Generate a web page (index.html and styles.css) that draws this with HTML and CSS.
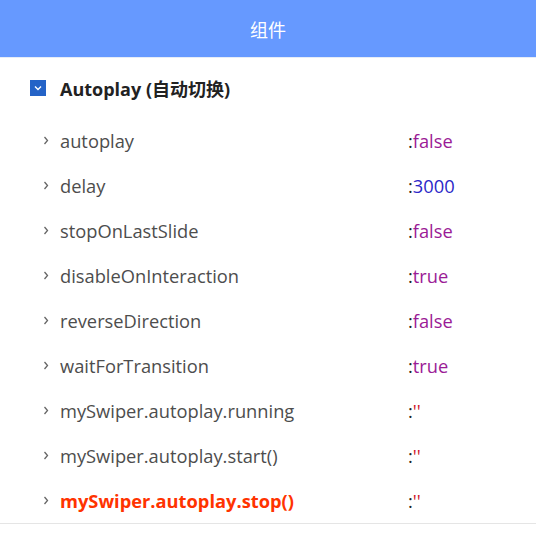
FILE: index.html
```html
<!DOCTYPE html>
<html lang="zh">
<head>
<meta charset="utf-8">
<link rel="stylesheet" href="styles.css">
</head>
<body>
<header class="nav">组件</header>
<section class="group">
  <div class="group-head">
    <span class="check"><svg width="16" height="16" viewBox="0 0 16 16"><rect width="16" height="16" fill="#2463c7"/><path d="M5 6.5 L8 9.5 L11 6.5" fill="none" stroke="#fff" stroke-width="1.4"/></svg></span>
    <span class="group-title">Autoplay (自动切换)</span>
  </div>
  <ul class="rows">
    <li class="row"><span class="arrow"><svg width="6" height="9" viewBox="0 0 6 9"><path d="M1.5 1 L4.5 4.5 L1.5 8" fill="none" stroke="#666" stroke-width="1.3"/></svg></span><span class="key">autoplay</span><span class="val">:<span class="bool">false</span></span></li>
    <li class="row"><span class="arrow"><svg width="6" height="9" viewBox="0 0 6 9"><path d="M1.5 1 L4.5 4.5 L1.5 8" fill="none" stroke="#666" stroke-width="1.3"/></svg></span><span class="key">delay</span><span class="val">:<span class="num">3000</span></span></li>
    <li class="row"><span class="arrow"><svg width="6" height="9" viewBox="0 0 6 9"><path d="M1.5 1 L4.5 4.5 L1.5 8" fill="none" stroke="#666" stroke-width="1.3"/></svg></span><span class="key">stopOnLastSlide</span><span class="val">:<span class="bool">false</span></span></li>
    <li class="row"><span class="arrow"><svg width="6" height="9" viewBox="0 0 6 9"><path d="M1.5 1 L4.5 4.5 L1.5 8" fill="none" stroke="#666" stroke-width="1.3"/></svg></span><span class="key">disableOnInteraction</span><span class="val">:<span class="bool">true</span></span></li>
    <li class="row"><span class="arrow"><svg width="6" height="9" viewBox="0 0 6 9"><path d="M1.5 1 L4.5 4.5 L1.5 8" fill="none" stroke="#666" stroke-width="1.3"/></svg></span><span class="key">reverseDirection</span><span class="val">:<span class="bool">false</span></span></li>
    <li class="row"><span class="arrow"><svg width="6" height="9" viewBox="0 0 6 9"><path d="M1.5 1 L4.5 4.5 L1.5 8" fill="none" stroke="#666" stroke-width="1.3"/></svg></span><span class="key">waitForTransition</span><span class="val">:<span class="bool">true</span></span></li>
    <li class="row"><span class="arrow"><svg width="6" height="9" viewBox="0 0 6 9"><path d="M1.5 1 L4.5 4.5 L1.5 8" fill="none" stroke="#666" stroke-width="1.3"/></svg></span><span class="key">mySwiper.autoplay.running</span><span class="val">:<span class="str">''</span></span></li>
    <li class="row"><span class="arrow"><svg width="6" height="9" viewBox="0 0 6 9"><path d="M1.5 1 L4.5 4.5 L1.5 8" fill="none" stroke="#666" stroke-width="1.3"/></svg></span><span class="key">mySwiper.autoplay.start()</span><span class="val">:<span class="str">''</span></span></li>
    <li class="row active"><span class="arrow"><svg width="6" height="9" viewBox="0 0 6 9"><path d="M1.5 1 L4.5 4.5 L1.5 8" fill="none" stroke="#666" stroke-width="1.3"/></svg></span><span class="key">mySwiper.autoplay.stop()</span><span class="val">:<span class="str">''</span></span></li>
  </ul>
</section>
</body>
</html>
```
FILE: styles.css
```css
* { box-sizing: border-box; }
body {
  margin: 0;
  background: #fff;
  font-family: "Open Sans", "Noto Sans CJK SC", sans-serif;
}
.nav {
  height: 58px;
  background: #6699ff;
  border-bottom: 1px solid #e6ecf7;
  color: #fff;
  font-size: 18px;
  display: flex;
  align-items: center;
  justify-content: center;
}
.group {
  border-bottom: 1px solid #e5e5e5;
}
.group-head {
  height: 60px;
  display: flex;
  align-items: center;
  padding-left: 30px;
}
.check { display: flex; width: 16px; height: 16px; margin-right: 14px; }
.group-title {
  font-size: 18px;
  font-weight: 700;
  color: #222;
}
.rows { list-style: none; margin: 0; padding: 0; }
.row {
  height: 45px;
  display: flex;
  align-items: center;
  font-size: 18.3px;
  color: #4d4d4d;
}
.arrow {
  width: 60px;
  padding-left: 43px;
  display: flex;
  align-items: center;
}
.key { width: 348px; }
.val { color: #222; }
.bool { color: #9b1b96; }
.num { color: #2b27c8; }
.str { color: #d0152b; }
.row.active .key { color: #ff3300; font-weight: 700; }
```
